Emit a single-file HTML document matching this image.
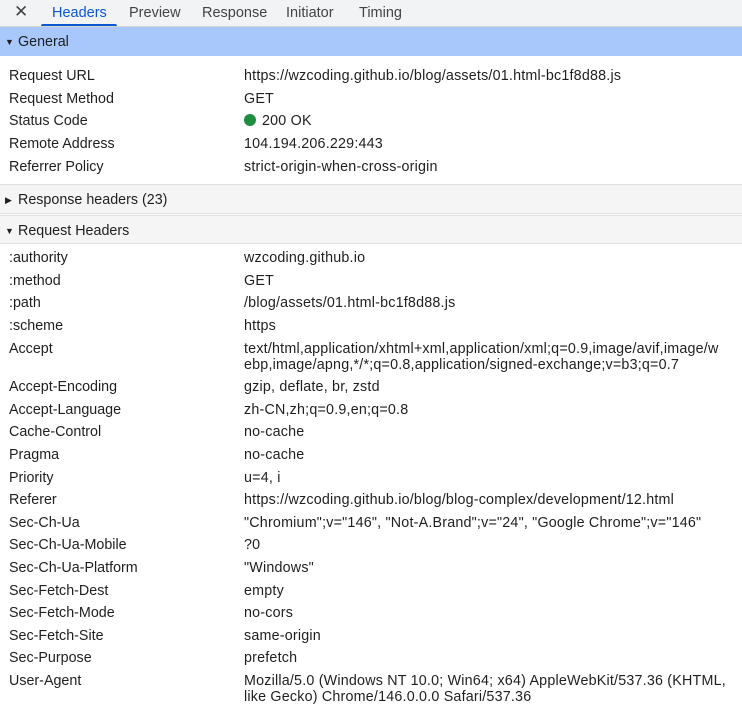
<!DOCTYPE html>
<html><head><meta charset="utf-8"><style>
*{margin:0;padding:0;box-sizing:border-box}
body{width:742px;height:712px;overflow:hidden;background:#fff;font-family:"Liberation Sans",sans-serif;font-size:14.3px;color:#1f1f1f}
.tabs{height:27px;background:#f1f3f4;border-bottom:1px solid #d6d6d6;position:relative;font-size:14px}
.tabs span{position:absolute;top:5px;font-size:14.5px;color:#444}
.tabs .act{color:#0b57d0}
.ul{position:absolute;left:41px;top:24px;width:76px;height:2px;background:#0b57d0;border-radius:2px 2px 0 0}
.sec{height:29px;line-height:31px;padding-left:5px;font-size:14.3px;color:#1f1f1f;border-bottom:1px solid #e0e0e0}
.gen{background:#a8c7fa;height:29px;border-bottom:none}
.grey{background:#f5f5f5}
.tri{display:inline-block;font-size:9px;width:13px;vertical-align:1px}
.body{padding:9px 0 6px;border-bottom:1px solid #e0e0e0}
.row{display:flex;line-height:16px;padding:3.3px 0;white-space:nowrap}
.k{width:244px;padding-left:9px;flex:none}
.v{flex:1;letter-spacing:0.2px}
.dot{display:inline-block;width:12px;height:12px;border-radius:50%;background:#1e8e3e;vertical-align:-1px;margin-right:6px}
</style></head><body>
<div class="tabs">
<span style="left:14px;font-size:17px;top:2px;color:#444">✕</span>
<span class="act" style="left:52px">Headers</span>
<span style="left:129px">Preview</span>
<span style="left:202px">Response</span>
<span style="left:286px">Initiator</span>
<span style="left:359px">Timing</span>
<div class="ul"></div>
</div>
<div class="sec gen"><span class="tri">▼</span>General</div>
<div class="body">
<div class="row"><div class="k">Request URL</div><div class="v">https://wzcoding.github.io/blog/assets/01.html-bc1f8d88.js</div></div>
<div class="row"><div class="k">Request Method</div><div class="v">GET</div></div>
<div class="row"><div class="k">Status Code</div><div class="v"><span class="dot"></span>200 OK</div></div>
<div class="row"><div class="k">Remote Address</div><div class="v">104.194.206.229:443</div></div>
<div class="row"><div class="k">Referrer Policy</div><div class="v">strict-origin-when-cross-origin</div></div>
</div>
<div class="sec grey"><span class="tri">▶</span>Response headers (23)</div>
<div class="sec grey" style="border-top:1px solid #e0e0e0;margin-top:1px"><span class="tri">▼</span>Request Headers</div>
<div style="padding-top:3px">
<div class="row"><div class="k">:authority</div><div class="v">wzcoding.github.io</div></div>
<div class="row"><div class="k">:method</div><div class="v">GET</div></div>
<div class="row"><div class="k">:path</div><div class="v">/blog/assets/01.html-bc1f8d88.js</div></div>
<div class="row"><div class="k">:scheme</div><div class="v">https</div></div>
<div class="row"><div class="k">Accept</div><div class="v">text/html,application/xhtml+xml,application/xml;q=0.9,image/avif,image/w<br>ebp,image/apng,*/*;q=0.8,application/signed-exchange;v=b3;q=0.7</div></div>
<div class="row"><div class="k">Accept-Encoding</div><div class="v">gzip, deflate, br, zstd</div></div>
<div class="row"><div class="k">Accept-Language</div><div class="v">zh-CN,zh;q=0.9,en;q=0.8</div></div>
<div class="row"><div class="k">Cache-Control</div><div class="v">no-cache</div></div>
<div class="row"><div class="k">Pragma</div><div class="v">no-cache</div></div>
<div class="row"><div class="k">Priority</div><div class="v">u=4, i</div></div>
<div class="row"><div class="k">Referer</div><div class="v">https://wzcoding.github.io/blog/blog-complex/development/12.html</div></div>
<div class="row"><div class="k">Sec-Ch-Ua</div><div class="v">"Chromium";v="146", "Not-A.Brand";v="24", "Google Chrome";v="146"</div></div>
<div class="row"><div class="k">Sec-Ch-Ua-Mobile</div><div class="v">?0</div></div>
<div class="row"><div class="k">Sec-Ch-Ua-Platform</div><div class="v">"Windows"</div></div>
<div class="row"><div class="k">Sec-Fetch-Dest</div><div class="v">empty</div></div>
<div class="row"><div class="k">Sec-Fetch-Mode</div><div class="v">no-cors</div></div>
<div class="row"><div class="k">Sec-Fetch-Site</div><div class="v">same-origin</div></div>
<div class="row"><div class="k">Sec-Purpose</div><div class="v">prefetch</div></div>
<div class="row"><div class="k">User-Agent</div><div class="v">Mozilla/5.0 (Windows NT 10.0; Win64; x64) AppleWebKit/537.36 (KHTML,<br>like Gecko) Chrome/146.0.0.0 Safari/537.36</div></div>
</div>
</body></html>
